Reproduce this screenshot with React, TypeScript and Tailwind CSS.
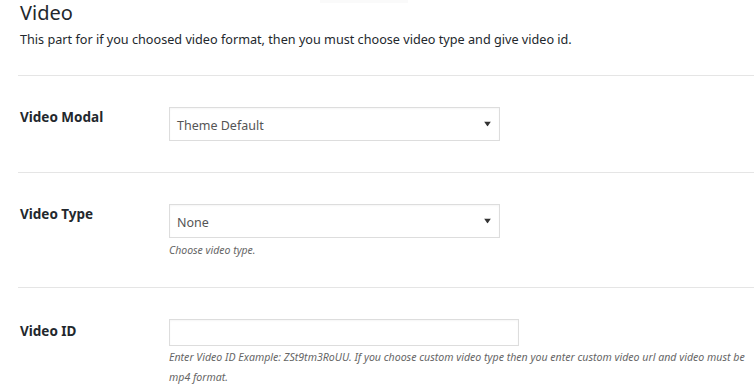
import React from "react";

function Arrow() {
  return (
    <svg width="7" height="5" viewBox="0 0 7 5" className="absolute right-[8px] top-1/2 -translate-y-1/2">
      <path d="M0 0 L7 0 L3.5 5 Z" fill="#333" />
    </svg>
  );
}

function SelectBox({ value }: { value: string }) {
  return (
    <div className="relative w-[331px] h-[34px] border border-[#dddddd] bg-white flex items-center pl-[7px] pt-[4px] text-[12.5px] text-[#555] shadow-[inset_0_1px_2px_rgba(0,0,0,0.04)]">
      <span>{value}</span>
      <Arrow />
    </div>
  );
}

export default function App() {
  return (
    <div className="w-[754px] h-[392px] bg-white overflow-hidden relative" style={{ fontFamily: '"Noto Sans", "Open Sans", Arial, sans-serif' }}>
      <div className="absolute left-[320px] top-0 w-[88px] h-[3px] bg-[#fafafa]" />
      <div className="pl-[20px] pt-[1px]">
        <h2 className="text-[20px] leading-[24px] text-[#23282d]">Video</h2>
        <p className="text-[12.65px] leading-[16px] text-[#23282d] mt-[6px]">
          This part for if you choosed video format, then you must choose video type and give video id.
        </p>
      </div>
      <div className="ml-[18px] mt-[28px]">
        <div className="border-t border-[#e5e5e5] h-[97px] flex pt-[31px]">
          <div className="w-[151px] shrink-0 pl-[2px] pt-[1px] text-[13.5px] leading-[18px] font-bold text-[#23282d]">Video Modal</div>
          <div><SelectBox value="Theme Default" /></div>
        </div>
        <div className="border-t border-[#e5e5e5] h-[115px] flex pt-[31px]">
          <div className="w-[151px] shrink-0 pl-[2px] pt-[1px] text-[13.5px] leading-[18px] font-bold text-[#23282d]">Video Type</div>
          <div>
            <SelectBox value="None" />
            <p className="mt-[3px] text-[10.5px] leading-[18px] italic text-[#666]">Choose video type.</p>
          </div>
        </div>
        <div className="border-t border-[#e5e5e5] flex pt-[31px]">
          <div className="w-[151px] shrink-0 pl-[2px] pt-[3px] text-[13.5px] leading-[18px] font-bold text-[#23282d]">Video ID</div>
          <div className="shrink-0">
            <div className="w-[350px] h-[27px] border border-[#dddddd] bg-white shadow-[inset_0_1px_2px_rgba(0,0,0,0.04)]" />
            <p className="mt-[1px] text-[10.6px] leading-[20px] italic text-[#666] w-[586px]">
              Enter Video ID Example: ZSt9tm3RoUU. If you choose custom video type then you enter custom video url and video must be mp4 format.
            </p>
          </div>
        </div>
      </div>
    </div>
  );
}
